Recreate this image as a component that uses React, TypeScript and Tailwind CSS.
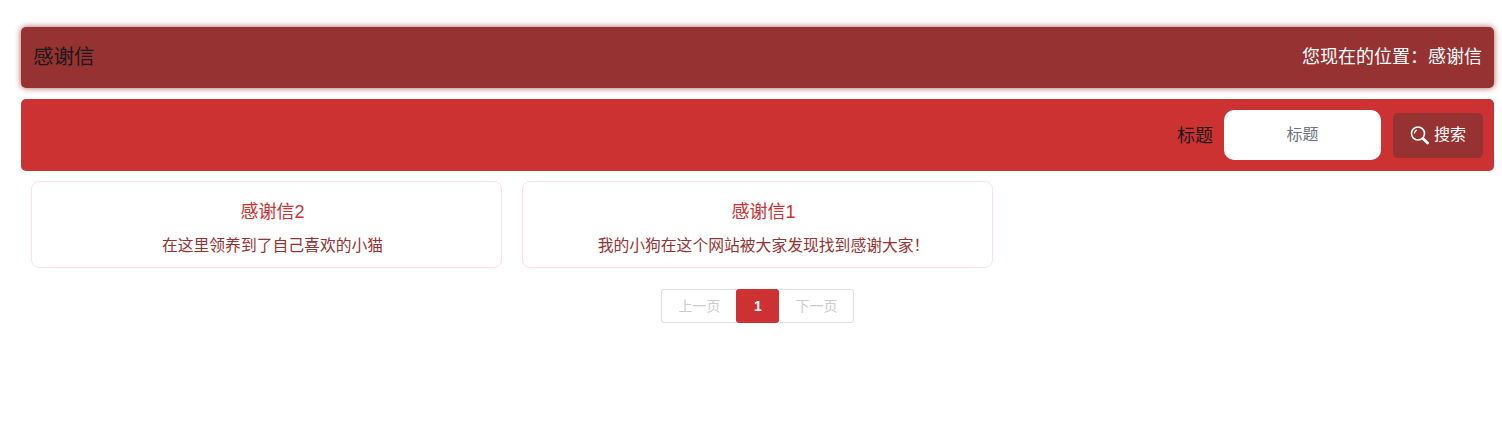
export default function App() {
  return (
    <div className="h-[438px] bg-white px-[21px] pt-[27px] pr-2 font-['Liberation_Sans','Noto_Sans_CJK_SC',sans-serif]">
      <div className="flex h-[61px] items-center justify-between rounded-[5px] bg-[#963232] px-3 shadow-[0_0_6px_rgba(150,50,50,0.8)]">
        <span className="text-[20.5px] text-[#1a1a1a]">感谢信</span>
        <span className="text-[18px] text-white">您现在的位置：感谢信</span>
      </div>

      <div className="mt-[11px] flex h-[72px] items-center justify-end rounded-[5px] bg-[#cd3232] pr-[11px]">
        <span className="pt-[2px] text-[18px] text-[#1a1a1a]">标题</span>
        <input
          placeholder="标题"
          className="ml-[11px] h-[50px] w-[157px] rounded-[10px] bg-white pb-[1px] text-center text-[16px] outline-none placeholder:text-[#6c757d]"
        />
        <button className="ml-3 flex h-[45px] w-[90px] items-center justify-center gap-[5px] rounded-[5px] bg-[#963232] text-[16px] text-white">
          <svg width="19" height="19" viewBox="0 0 19 19" fill="none" stroke="currentColor">
            <circle cx="8" cy="7.5" r="6.5" strokeWidth="1.6" />
            <path d="M4.5 7.5a3.5 3.5 0 0 1 2.5-3.4" strokeWidth="1.1" />
            <path d="M13 12.5l4.5 4.5" strokeWidth="2.8" strokeLinecap="round" />
          </svg>
          搜索
        </button>
      </div>

      <div className="mt-[10px] flex gap-5 pl-[10px]">
        <div className="flex h-[87px] w-[471px] flex-col items-center rounded-[8px] border border-[#ffdfe3] pt-[17px] pl-[12px]">
          <span className="text-[18px] leading-[26px] text-[#cd3232]">感谢信2</span>
          <span className="mt-[9px] text-[15.8px] leading-[24px] text-[#963232]">在这里领养到了自己喜欢的小猫</span>
        </div>
        <div className="flex h-[87px] w-[471px] flex-col items-center rounded-[8px] border border-[#ffdfe3] pt-[17px] pl-[12px]">
          <span className="text-[18px] leading-[26px] text-[#cd3232]">感谢信1</span>
          <span className="mt-[9px] text-[15.8px] leading-[24px] text-[#963232]">我的小狗在这个网站被大家发现找到感谢大家！</span>
        </div>
      </div>

      <div className="mt-[21px] flex justify-center pr-[1px]">
        <div className="flex h-[34px] w-[193px] text-[14px]">
          <span className="flex w-[75px] items-center justify-center rounded-l-[3px] border border-r-0 border-[#dee2e6] pl-[2px] text-[#cccccc]">上一页</span>
          <span className="flex w-[43px] items-center justify-center rounded-[3px] bg-[#cd3232] pl-[2px] font-bold text-white">1</span>
          <span className="flex w-[75px] items-center justify-center rounded-r-[3px] border border-l-0 border-[#dee2e6] pl-[2px] text-[#cccccc]">下一页</span>
        </div>
      </div>
    </div>
  );
}
